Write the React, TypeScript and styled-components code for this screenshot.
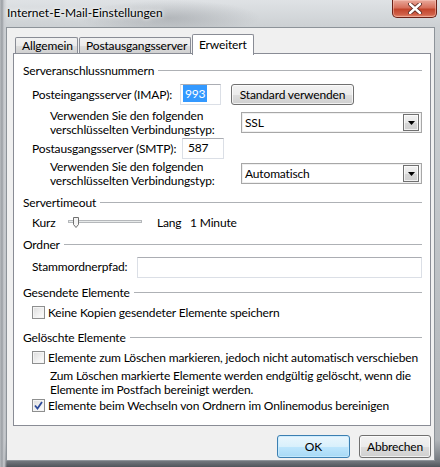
import * as React from 'react';
import styled, { createGlobalStyle } from 'styled-components';

const GlobalStyle = createGlobalStyle`
  html, body {
    margin: 0;
    padding: 0;
  }
  body {
    font-family: Lato, "Noto Sans", "Liberation Sans", sans-serif;
    font-size: 12px;
    letter-spacing: -0.15px;
    color: #000;
  }
`

const Window = styled.div`
  width: 440px;
  height: 467px;
  display: flex;
  flex-direction: column;
  box-sizing: border-box;
  background:
    radial-gradient(ellipse 90px 18px at 170px 18px, rgba(120, 124, 130, 0.35), transparent),
    linear-gradient(to right, #b8bcc0 0px, #9a9ea3 2px, #c9ccd0 4px, transparent 7px),
    linear-gradient(to bottom, #dfe2e5 0px, #cdd1d4 26px, #c2c6ca 200px, #b1b5b9 440px, #73787e 461px, #50555b 467px);
`

const TitleBar = styled.div`
  height: 27px;
  display: flex;
  justify-content: space-between;
  align-items: flex-start;
`

const Title = styled.div`
  padding: 5px 0 0 7px;
  line-height: 16px;
  letter-spacing: 0;
  text-shadow: 0 0 6px #fff, 0 0 3px #fff;
`

const CloseButton = styled.div`
  width: 45px;
  height: 18px;
  margin-right: 3px;
  box-sizing: border-box;
  border: 1px solid #6b2117;
  border-top: none;
  border-radius: 0 0 5px 5px;
  background: linear-gradient(to bottom, #e9a99b 0%, #d7705c 45%, #c2452c 55%, #d06048 85%, #e48d72 100%);
  box-shadow: inset 0 0 0 1px rgba(255, 210, 200, 0.45);
  display: flex;
  align-items: center;
  justify-content: center;
`

const Client = styled.div`
  flex: 1;
  margin: 0 5px 6px 6px;
  border: 1px solid #8d9399;
  background: #f0f0f0;
  padding: 6px 3px 2px 6px;
  display: flex;
  flex-direction: column;
`

const TabStrip = styled.div`
  height: 20px;
  display: flex;
  align-items: flex-start;
  padding-left: 2px;
  margin-bottom: -1px;
`

const Tab = styled.div<{ $active?: boolean; $w: number }>`
  position: relative;
  z-index: ${p => (p.$active ? 2 : 0)};
  box-sizing: border-box;
  width: ${p => p.$w}px;
  height: ${p => (p.$active ? 21 : 17)}px;
  margin-top: ${p => (p.$active ? 0 : 3)}px;
  margin-right: 1px;
  border: 1px solid #898c95;
  border-bottom: none;
  border-radius: 2px 2px 0 0;
  background: ${p => (p.$active ? '#fff' : 'linear-gradient(to bottom, #f2f2f2 0%, #ebebeb 50%, #dddddd 51%, #cfcfcf 100%)')};
  padding: ${p => (p.$active ? '3px 0 0 6px' : '1px 0 0 6px')};
  line-height: 14px;
  white-space: nowrap;
`

const Panel = styled.div`
  flex: 1;
  position: relative;
  z-index: 1;
  background: #fff;
  border: 1px solid #898c95;
  padding: 9px 8px 0 9px;
  display: flex;
  flex-direction: column;
`

const Header = styled.div<{ $mt?: number }>`
  display: flex;
  align-items: center;
  gap: 4px;
  height: 15px;
  margin-top: ${p => p.$mt ?? 0}px;
  white-space: nowrap;

  &::after {
    content: '';
    flex: 1;
    height: 1px;
    background: #aeb1b5;
  }
`

const Row = styled.div<{ $mt?: number; $h?: number; $indent?: number }>`
  display: flex;
  align-items: center;
  height: ${p => p.$h ?? 21}px;
  margin-top: ${p => p.$mt ?? 0}px;
  padding-left: ${p => p.$indent ?? 9}px;
  white-space: nowrap;
`

const Label = styled.span<{ $w?: number }>`
  display: inline-block;
  width: ${p => (p.$w ? `${p.$w}px` : 'auto')};
  flex-shrink: 0;
  line-height: 14px;
`

const TextBox = styled.div<{ $w?: number }>`
  box-sizing: border-box;
  width: ${p => (p.$w ? `${p.$w}px` : 'auto')};
  flex: ${p => (p.$w ? 'none' : 1)};
  height: 21px;
  border: 1px solid #dbdfe6;
  border-top-color: #abadb3;
  background: #fff;
  padding: 2px 0 0 5px;
  line-height: 14px;
`

const Selected = styled.span`
  background: #3399ff;
  color: #fff;
  margin-left: -3px;
  padding: 1px 2px;
`

const Button = styled.div<{ $w: number; $h?: number; $default?: boolean; $ml?: number }>`
  box-sizing: border-box;
  width: ${p => p.$w}px;
  height: ${p => p.$h ?? 21}px;
  margin-left: ${p => p.$ml ?? 0}px;
  border: 1px solid ${p => (p.$default ? '#3c7fb1' : '#707070')};
  border-radius: 3px;
  background: ${p =>
    p.$default
      ? 'linear-gradient(to bottom, #eaf6fd 0%, #d9f0fc 50%, #bee6fd 51%, #a7d9f5 100%)'
      : 'linear-gradient(to bottom, #f2f2f2 0%, #ebebeb 50%, #dddddd 51%, #cfcfcf 100%)'};
  box-shadow: inset 0 0 0 1px ${p => (p.$default ? 'rgba(200,235,255,0.8)' : 'rgba(255,255,255,0.7)')};
  display: flex;
  align-items: center;
  justify-content: center;
  white-space: nowrap;
`

const Select = styled.div`
  box-sizing: border-box;
  width: 181px;
  height: 21px;
  border: 1px solid #a7a7a7;
  box-shadow: inset 0 0 0 1px #f0f0f0;
  background: #fff;
  display: flex;
  align-items: center;
  justify-content: space-between;
  padding: 0 2px 0 3px;
`

const DropArrow = styled.div`
  box-sizing: border-box;
  width: 16px;
  height: 17px;
  border: 1px solid #707070;
  background: linear-gradient(to bottom, #f2f2f2 0%, #e6e6e6 50%, #d6d6d6 51%, #cfcfcf 100%);
  box-shadow: inset 0 0 0 1px rgba(255, 255, 255, 0.7);
  display: flex;
  align-items: center;
  justify-content: center;
`

const Check = styled.span`
  box-sizing: border-box;
  width: 13px;
  height: 13px;
  flex-shrink: 0;
  margin-right: 3px;
  border: 1px solid #8e8f8f;
  background: linear-gradient(135deg, #dcdcdc 0%, #f2f2f2 60%, #fff 100%);
  box-shadow: inset 0 0 0 1px #f4f4f4;
  display: flex;
  align-items: center;
  justify-content: center;
`

const Info = styled.div`
  margin-top: 4px;
  padding-left: 27px;
  line-height: 14px;
  white-space: nowrap;
`

const ButtonRow = styled.div`
  display: flex;
  justify-content: flex-end;
  gap: 9px;
  margin-top: 9px;
`

const Slider = () => (
  <svg width="74" height="12" viewBox="0 0 74 12" style={{ margin: '0 15px 0 0' }}>
    <rect x="0.5" y="3.5" width="73" height="2" fill="#e7eaea" stroke="#b5b8bb" />
    <path d="M5.5 0.5 H10.5 V7.5 L8 10.5 L5.5 7.5 Z" fill="#f4f4f4" stroke="#707070" />
  </svg>
)

const Checkbox = ({ checked }: { checked?: boolean }) => (
  <Check>
    {checked && (
      <svg width="9" height="9" viewBox="0 0 9 9">
        <path d="M1 4.5 L3.5 7.5 L8 1" fill="none" stroke="#2c4a9a" strokeWidth="1.8" />
      </svg>
    )}
  </Check>
)

const Combo = ({ value }: { value: string }) => (
  <Select>
    <span>{value}</span>
    <DropArrow>
      <svg width="7" height="4" viewBox="0 0 7 4">
        <path d="M0 0 H7 L3.5 4 Z" fill="#000" />
      </svg>
    </DropArrow>
  </Select>
)

const App: React.FunctionComponent = () => {
  return (
    <Window>
      <GlobalStyle />
      <TitleBar>
        <Title>Internet-E-Mail-Einstellungen</Title>
        <CloseButton>
          <svg width="14" height="11" viewBox="0 0 14 11">
            <path d="M2 1 L12 10 M12 1 L2 10" stroke="#5a2a22" strokeWidth="4.2" strokeLinecap="round" />
            <path d="M2 1 L12 10 M12 1 L2 10" stroke="#fff" strokeWidth="2.4" strokeLinecap="round" />
          </svg>
        </CloseButton>
      </TitleBar>

      <Client>
        <TabStrip>
          <Tab $w={63}>Allgemein</Tab>
          <Tab $w={112}>Postausgangsserver</Tab>
          <Tab $w={62} $active>Erweitert</Tab>
        </TabStrip>

        <Panel>
          <Header>Serveranschlussnummern</Header>
          <Row $mt={6}>
            <Label $w={148}>Posteingangsserver (IMAP):</Label>
            <TextBox $w={41}><Selected>993</Selected></TextBox>
            <Button $w={123} $ml={10}>Standard verwenden</Button>
          </Row>
          <Row $mt={7} $indent={27}>
            <Label $w={191}>Verwenden Sie den folgenden<br />verschlüsselten Verbindungstyp:</Label>
            <Combo value="SSL" />
          </Row>
          <Row $mt={5}>
            <Label $w={150}>Postausgangsserver (SMTP):</Label>
            <TextBox $w={42}>587</TextBox>
          </Row>
          <Row $mt={4} $indent={27}>
            <Label $w={191}>Verwenden Sie den folgenden<br />verschlüsselten Verbindungstyp:</Label>
            <Combo value="Automatisch" />
          </Row>

          <Header $mt={11}>Servertimeout</Header>
          <Row $mt={5} $h={15}>
            <Label $w={36}>Kurz</Label>
            <Slider />
            <Label $w={33}>Lang</Label>
            <Label>1 Minute</Label>
          </Row>

          <Header $mt={7}>Ordner</Header>
          <Row $mt={5} $h={20}>
            <Label $w={105}>Stammordnerpfad:</Label>
            <TextBox />
          </Row>

          <Header $mt={8}>Gesendete Elemente</Header>
          <Row $mt={5} $h={15}>
            <Checkbox />
            <Label>Keine Kopien gesendeter Elemente speichern</Label>
          </Row>

          <Header $mt={10}>Gelöschte Elemente</Header>
          <Row $mt={5} $h={15}>
            <Checkbox />
            <Label>Elemente zum Löschen markieren, jedoch nicht automatisch verschieben</Label>
          </Row>
          <Info>
            Zum Löschen markierte Elemente werden endgültig gelöscht, wenn die<br />
            Elemente im Postfach bereinigt werden.
          </Info>
          <Row $mt={1} $h={15}>
            <Checkbox checked />
            <Label>Elemente beim Wechseln von Ordnern im Onlinemodus bereinigen</Label>
          </Row>
        </Panel>

        <ButtonRow>
          <Button $w={73} $h={23} $default>OK</Button>
          <Button $w={72} $h={23}>Abbrechen</Button>
        </ButtonRow>
      </Client>
    </Window>
  );
};

export default App;
